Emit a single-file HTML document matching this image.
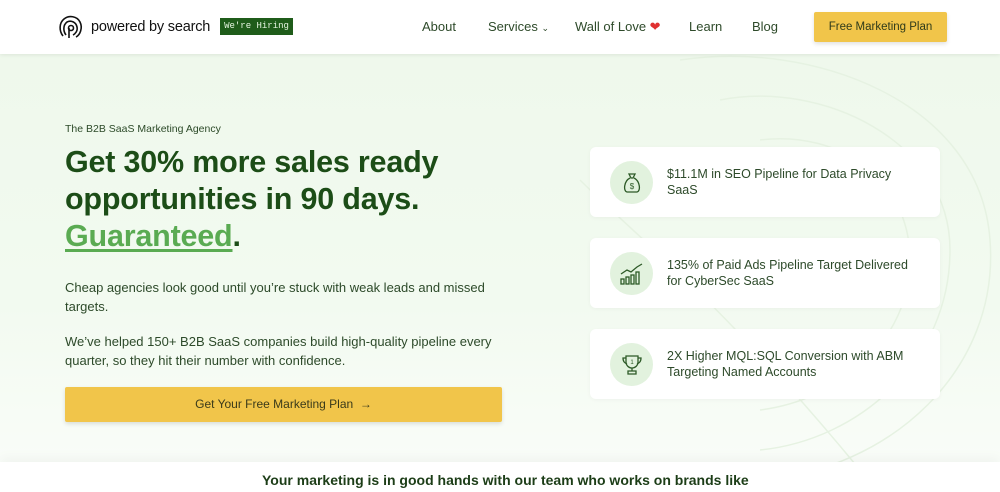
<!DOCTYPE html>
<html><head><meta charset="utf-8"><style>
*{margin:0;padding:0;box-sizing:border-box}
body{width:1000px;height:481px;overflow:hidden;font-family:"Liberation Sans",sans-serif;background:linear-gradient(#eef8eb 0,#f2faf0 300px,#fafdf9 481px);position:relative}
.hdr{position:absolute;top:0;left:0;width:1000px;height:54px;background:#fff;box-shadow:0 1px 4px rgba(0,0,0,.08);z-index:2}
.logo{position:absolute;left:58px;top:14px;display:flex;align-items:center;gap:7px;font-size:14.5px;color:#111;letter-spacing:-.2px}
.hire{position:absolute;left:220px;top:18px;width:73px;height:17px;background:#1f5c1a;color:#e6f5e1;font-family:"Liberation Mono",monospace;font-size:9px;line-height:17px;text-align:center;white-space:nowrap}
.nav{position:absolute;top:19px;font-size:13px;color:#2e4a2a}
.cta{position:absolute;left:814px;top:12px;width:133px;height:30px;background:#f1c54a;color:#2e3a1a;font-size:11.5px;line-height:30px;text-align:center;border-radius:2px;box-shadow:0 2px 4px rgba(0,0,0,.12)}
.tag{position:absolute;left:65px;top:123px;font-size:10.5px;color:#2c4a28}
h1{position:absolute;left:65px;top:144px;font-size:30.5px;line-height:37px;color:#1c4d17;font-weight:700;letter-spacing:-.2px}
h1 u{color:#5aab52;text-decoration-thickness:3px;text-underline-offset:3px}
p{position:absolute;left:65px;font-size:13px;line-height:19px;color:#2d4a2a;width:440px}
.btn{position:absolute;left:65px;top:387px;width:437px;height:35px;background:#f1c54a;color:#3a3a1a;font-size:12px;line-height:35px;text-align:center;border-radius:2px;box-shadow:0 2px 4px rgba(0,0,0,.12)}
.card{position:absolute;left:590px;width:350px;height:70px;background:#fff;border-radius:6px;box-shadow:0 1px 4px rgba(0,0,0,.04)}
.ic{position:absolute;left:20px;top:14px;width:43px;height:43px;border-radius:50%;background:#e2f2de;display:flex;align-items:center;justify-content:center}
.ct{position:absolute;left:77px;top:19px;font-size:12.5px;line-height:16px;color:#2d4a2a;width:255px}
.bot{position:absolute;left:0;top:462px;width:1000px;height:30px;background:#fff;box-shadow:0 -4px 12px rgba(0,0,0,.04)}
.bt{position:absolute;left:262px;top:472px;font-size:14px;font-weight:700;color:#1c3d17}
</style></head><body>
<svg style="position:absolute;left:560px;top:40px" width="440" height="440" fill="none" stroke="#e6f2e2" stroke-width="1.5">
<path d="M120 20 C250 0 420 60 430 200 C440 330 330 430 200 440"/>
<path d="M160 60 C260 40 390 100 390 210 C390 320 300 400 200 410"/>
<path d="M200 100 C280 90 350 140 350 220 C350 300 280 360 200 370"/>
<path d="M20 140 C80 200 160 260 300 430"/>
</svg>
<div class="hdr">
<div class="logo"><svg width="26" height="26" viewBox="0 0 26 26" fill="none" stroke="#111" stroke-width="1.6"><path d="M5 22 C1 17 1 9 6 5 C11 1 19 2 22 8 C25 14 22 21 18 23"/><path d="M8 21 C5 17 5 11 9 8 C13 6 18 8 19 13 C20 17 17 20 15 21"/><circle cx="13" cy="14" r="2.5"/><path d="M11 24 V14"/></svg><span>powered by search</span></div>
<div class="hire">We're Hiring</div>
<div class="nav" style="left:422px">About</div>
<div class="nav" style="left:488px">Services <span style="font-size:9px">⌄</span></div>
<div class="nav" style="left:575px">Wall of Love <span style="color:#e03030">❤</span></div>
<div class="nav" style="left:689px">Learn</div>
<div class="nav" style="left:752px">Blog</div>
<div class="cta">Free Marketing Plan</div>
</div>
<div class="tag">The B2B SaaS Marketing Agency</div>
<h1>Get 30% more sales ready<br>opportunities in 90 days.<br><u>Guaranteed</u>.</h1>
<p style="top:278px">Cheap agencies look good until you’re stuck with weak leads and missed targets.</p>
<p style="top:332px">We’ve helped 150+ B2B SaaS companies build high-quality pipeline every quarter, so they hit their number with confidence.</p>
<div class="btn">Get Your Free Marketing Plan &nbsp;→</div>
<div class="card" style="top:147px"><div class="ic"><svg width="24" height="24" viewBox="0 0 24 24" fill="none" stroke="#2d5a27" stroke-width="1.3"><path d="M9 3h6l-2 4h-2z"/><path d="M10 7 C4 10 3 20 7 21 H17 C21 20 20 10 14 7"/><text x="12" y="18" font-size="8" text-anchor="middle" fill="#2d5a27" stroke="none">$</text></svg></div><div class="ct">$11.1M in SEO Pipeline for Data Privacy<br>SaaS</div></div>
<div class="card" style="top:238px"><div class="ic"><svg width="26" height="24" viewBox="0 0 26 24" fill="none" stroke="#2d5a27" stroke-width="1.3"><path d="M2 12 L8 8 L12 10 L18 5 L23 2"/><rect x="2" y="17" width="3" height="5"/><rect x="7" y="15" width="3" height="7"/><rect x="12" y="13" width="3" height="9"/><rect x="17" y="10" width="3" height="12"/></svg></div><div class="ct">135% of Paid Ads Pipeline Target Delivered<br>for CyberSec SaaS</div></div>
<div class="card" style="top:329px"><div class="ic"><svg width="24" height="24" viewBox="0 0 24 24" fill="none" stroke="#2d5a27" stroke-width="1.3"><path d="M6 3h12v6a6 6 0 0 1-12 0z"/><path d="M6 5H3c0 4 2 5 4 6M18 5h3c0 4-2 5-4 6"/><path d="M12 15v3M8 21h8v-3H8z"/><text x="12" y="11" font-size="6" text-anchor="middle" fill="#2d5a27" stroke="none">1</text></svg></div><div class="ct">2X Higher MQL:SQL Conversion with ABM<br>Targeting Named Accounts</div></div>
<div class="bot"></div>
<div class="bt">Your marketing is in good hands with our team who works on brands like</div>
</body></html>
